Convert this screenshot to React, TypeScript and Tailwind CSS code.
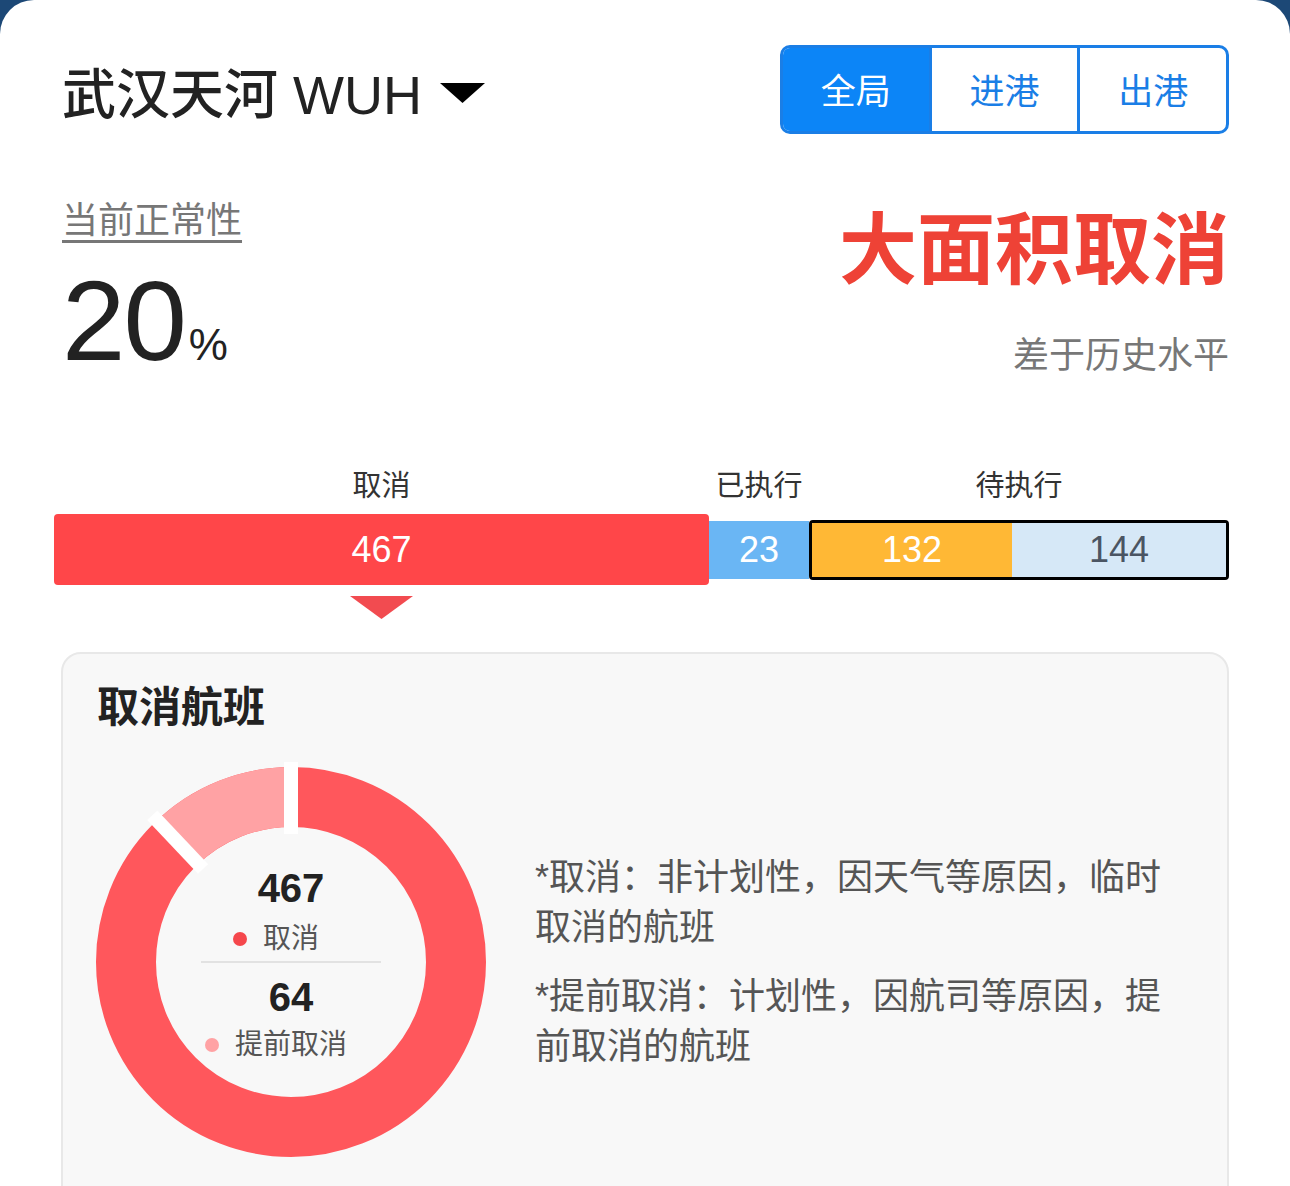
import React from 'react';

const bar = [
  { label: '取消', value: 467 },
  { label: '已执行', value: 23 },
  { label: '待执行', value: 276 },
];

// point on circle, angle in degrees clockwise from 12 o'clock
const pt = (cx: number, cy: number, r: number, deg: number) => {
  const a = ((deg - 90) * Math.PI) / 180;
  return [cx + r * Math.cos(a), cy + r * Math.sin(a)];
};

const Donut = () => {
  const cx = 200;
  const cy = 200;
  const r = 165;
  const lightDeg = (64 / (467 + 64)) * 360;
  const [x1, y1] = pt(cx, cy, r, 360 - lightDeg);
  const [x2, y2] = pt(cx, cy, r, 360);
  const [gx1, gy1] = pt(cx, cy, 128, 360 - lightDeg);
  const [gx2, gy2] = pt(cx, cy, 202, 360 - lightDeg);
  return (
    <svg width="400" height="400" viewBox="0 0 400 400" className="absolute inset-0">
      <circle cx={cx} cy={cy} r={r} fill="none" stroke="#ff575c" strokeWidth="60" />
      <path d={`M ${x1} ${y1} A ${r} ${r} 0 0 1 ${x2} ${y2}`} fill="none" stroke="#ffa2a4" strokeWidth="60" />
      <line x1={cx} y1={cy - 128} x2={cx} y2={cy - 202} stroke="#ffffff" strokeWidth="14" />
      <line x1={gx1} y1={gy1} x2={gx2} y2={gy2} stroke="#ffffff" strokeWidth="14" />
    </svg>
  );
};

const Legend = ({ value, label, dot, gap }: { value: number; label: string; dot: string; gap: string }) => (
  <div className="flex flex-col items-center">
    <div className="text-[40px] font-semibold leading-none text-[#222]">{value}</div>
    <div className={`relative ${gap} text-[28px] leading-none text-[#555]`}>
      <span className={`absolute left-[-30px] top-1/2 -translate-y-1/2 w-[14px] h-[14px] rounded-full ${dot}`}></span>
      {label}
    </div>
  </div>
);

export default function App() {
  return (
    <div className="min-h-screen bg-[#1c4876] font-['Liberation_Sans','Noto_Sans_CJK_SC',sans-serif]">
      <div className="h-[1186px] overflow-hidden bg-white rounded-t-[34px] pl-[62px] pr-[61px] pt-[45px]">
        {/* Header */}
        <div className="flex items-center justify-between">
          <div className="mt-[10px] flex items-center gap-[18px]">
            <h1 className="text-[54px] font-medium leading-none text-[#222]">武汉天河 WUH</h1>
            <svg width="45" height="20" viewBox="0 0 45 20" className="mt-[-3px]">
              <path d="M0 0 H45 L22.5 20 Z" fill="#000" />
            </svg>
          </div>
          <div className="flex h-[89px] w-[449px] rounded-[10px] border-[3px] border-[#1a7ee6] overflow-hidden text-[35px]">
            <button className="flex-1 bg-[#0c85f7] pt-[5px] text-white">全局</button>
            <button className="flex-1 border-l-[3px] border-[#1a7ee6] pt-[5px] text-[#1a7ee6]">进港</button>
            <button className="flex-1 border-l-[3px] border-[#1a7ee6] pt-[5px] text-[#1a7ee6]">出港</button>
          </div>
        </div>

        {/* Normality */}
        <div className="mt-[69px] flex justify-between">
          <div>
            <div className="inline-block text-[36px] leading-none text-[#777] underline decoration-[3px] underline-offset-[7px]">
              当前正常性
            </div>
            <div className="mt-[24px] flex items-baseline text-[#222]">
              <span className="text-[114px] font-medium leading-none tracking-[-2px]">20</span>
              <span className="ml-[4px] text-[44px] leading-none">%</span>
            </div>
          </div>
          <div className="flex flex-col items-end">
            <div className="mt-[9px] text-[78px] font-bold leading-none text-[#ee4236]">大面积取消</div>
            <div className="mt-[48px] text-[36px] leading-none text-[#777]">差于历史水平</div>
          </div>
        </div>

        {/* Status bar */}
        <div className="mt-[94px] ml-[-8px]">
          <div className="flex text-[29px] leading-none text-[#333]">
            <div className="w-[655px] text-center">{bar[0].label}</div>
            <div className="w-[100px] text-center">{bar[1].label}</div>
            <div className="flex-1 text-center">{bar[2].label}</div>
          </div>
          <div className="mt-[13px] flex items-center text-[36px] leading-none">
            <div className="flex h-[71px] w-[655px] items-center justify-center rounded-[4px] bg-[#ff4649] text-white">467</div>
            <div className="flex h-[58px] w-[100px] items-center justify-center bg-[#6ab6f4] text-white">23</div>
            <div className="flex h-[60px] flex-1 overflow-hidden rounded-[4px] border-[3px] border-black">
              <div className="flex w-[200px] items-center justify-center bg-[#ffb835] text-white">132</div>
              <div className="flex flex-1 items-center justify-center bg-[#d6e8f7] text-[#4b5563]">144</div>
            </div>
          </div>
          <div className="mt-[11px] flex w-[655px] justify-center">
            <svg width="63" height="23" viewBox="0 0 63 23">
              <path d="M0 0 H63 L31.5 23 Z" fill="#f24b50" />
            </svg>
          </div>
        </div>

        {/* Cancelled flights card */}
        <div className="mt-[33px] ml-[-1px] h-[600px] rounded-[20px] border-2 border-[#e8e8e8] bg-[#f8f8f8] pl-[34px] pt-[33px]">
          <h2 className="text-[42px] font-bold leading-none text-[#222]">取消航班</h2>
          <div className="mt-[33px] ml-[-6px] flex items-center">
            <div className="relative h-[400px] w-[400px] shrink-0">
              <Donut />
              <div className="absolute inset-0 flex flex-col items-center justify-center pt-[3px]">
                <Legend value={467} label="取消" dot="bg-[#f5474c]" gap="mt-[17px]" />
                <div className="mt-[8px] mb-[14px] h-[2px] w-[180px] bg-[#e2e2e2]"></div>
                <Legend value={64} label="提前取消" dot="bg-[#ffa2a4]" gap="mt-[14px]" />
              </div>
            </div>
            <div className="ml-[44px] w-[640px] text-[36px] leading-[50px] text-[#555]">
              <p>*取消：非计划性，因天气等原因，临时取消的航班</p>
              <p className="mt-[19px]">*提前取消：计划性，因航司等原因，提前取消的航班</p>
            </div>
          </div>
        </div>
      </div>
    </div>
  );
}
